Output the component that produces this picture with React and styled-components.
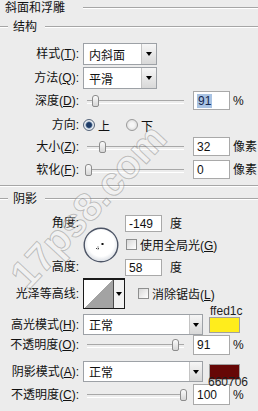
import React from "react";
import styled, { createGlobalStyle } from "styled-components";

const Global = createGlobalStyle`
  html, body { margin: 0; padding: 0; background: #ececec; }
  body {
    font-family: "Liberation Sans", "Noto Sans CJK SC", sans-serif;
    font-size: 12px;
    color: #111;
  }
  * { box-sizing: border-box; }
`;

const Panel = styled.div`
  position: relative;
  width: 258px;
  height: 411px;
  overflow: hidden;
  background: #ececec;
  display: flex;
  flex-direction: column;
`;

const Etched = styled.div`
  height: 2px;
  border-top: 1px solid #a6a6a6;
  border-bottom: 1px solid #ffffff;
`;

const TitleRow = styled.div`
  display: flex;
  align-items: center;
  height: 16px;
  padding-left: 5px;
`;

const Title = styled.span`
  white-space: nowrap;
  line-height: 14px;
`;

const TitleLine = styled(Etched)`
  flex: 1;
  margin-left: 18px;
`;

const GroupHeader = styled.div`
  display: flex;
  align-items: center;
  height: 20px;
  margin-top: ${(p) => p.$mt}px;
`;

const LeadLine = styled(Etched)`
  width: 8px;
`;

const HeaderText = styled.span`
  padding: 0 5px;
  line-height: 14px;
  white-space: nowrap;
`;

const TailLine = styled(Etched)`
  flex: 1;
  margin-left: 3px;
`;

const Rule = styled(Etched)`
  margin-top: ${(p) => p.$mt}px;
`;

const Row = styled.div`
  display: flex;
  align-items: center;
  height: ${(p) => p.$h}px;
  margin-top: ${(p) => p.$mt || 0}px;
  flex: none;
`;

const Label = styled.span`
  width: 79px;
  flex: none;
  text-align: right;
  white-space: nowrap;
  line-height: 14px;
`;

const Select = styled.div`
  display: flex;
  width: ${(p) => p.$w}px;
  height: 100%;
  margin-left: 4px;
  border: 1px solid #9da1a6;
  background: #fff;
  flex: none;
`;

const SelectText = styled.span`
  flex: 1;
  display: flex;
  align-items: center;
  padding-left: 5px;
  white-space: nowrap;
`;

const SelectArrow = styled.span`
  width: ${(p) => p.$w}px;
  border-left: 1px solid #c4c4c4;
  background: linear-gradient(#f6f6f6, #d8d8d8);
  display: flex;
  align-items: center;
  justify-content: center;
  &::after {
    content: "";
    border-left: 3.5px solid transparent;
    border-right: 3.5px solid transparent;
    border-top: 4px solid #000;
  }
`;

const Slider = styled.div`
  position: relative;
  width: 97px;
  height: 14px;
  margin-left: 8px;
  flex: none;
  &::before {
    content: "";
    position: absolute;
    left: 0;
    right: 0;
    top: 6px;
    height: 2px;
    border-top: 1px solid #a8a8a8;
    border-bottom: 1px solid #fff;
  }
`;

const Thumb = styled.span`
  position: absolute;
  top: 1px;
  width: 7px;
  height: 12px;
  border: 1px solid #8c8c8c;
  border-radius: 3px 3px 2px 2px;
  background: linear-gradient(#fbfbfb, #d6d6d6);
`;

const NumBox = styled.div`
  width: 37px;
  height: ${(p) => p.$h}px;
  margin-left: ${(p) => p.$ml}px;
  border: 1px solid #a9a9a9;
  background: #fff;
  display: flex;
  align-items: center;
  padding-left: 3px;
  flex: none;
  white-space: nowrap;
`;

const Selected = styled.span`
  background: #a9c3e3;
  color: #14264f;
  padding: 0 1px;
  line-height: 14px;
`;

const Unit = styled.span`
  margin-left: ${(p) => p.$ml || 3}px;
  white-space: nowrap;
  line-height: 12px;
`;

const Radio = styled.span`
  width: 12px;
  height: 12px;
  border-radius: 50%;
  margin-left: ${(p) => p.$ml}px;
  flex: none;
  border: 1px solid ${(p) => (p.$on ? "#56657a" : "#9a9a9a")};
  background: ${(p) =>
    p.$on
      ? "radial-gradient(circle, #1d3b66 0 2.4px, #7e97b6 3.2px, #eef2f6 4px, #c9d0d8 100%)"
      : "radial-gradient(circle, #f6f6f6 30%, #d2d2d2 100%)"};
`;

const RadioText = styled.span`
  margin-left: 3px;
`;

const AngleBlock = styled.div`
  display: flex;
  height: 61px;
  margin-top: 6px;
  flex: none;
`;

const AngleLabels = styled.div`
  width: 79px;
  display: flex;
  flex-direction: column;
  justify-content: space-between;
  text-align: right;
  & > span {
    height: 17px;
    line-height: 17px;
  }
`;

const Dial = styled.svg`
  width: 36px;
  height: 36px;
  margin-left: 4px;
  margin-top: 12px;
  flex: none;
`;

const AngleFields = styled.div`
  margin-left: 6px;
  display: flex;
  flex-direction: column;
`;

const Check = styled.span`
  width: 11px;
  height: 11px;
  flex: none;
  margin-left: ${(p) => p.$ml}px;
  border: 1px solid #8e8f8f;
  background: linear-gradient(135deg, #d8d8d8, #ffffff);
`;

const CheckText = styled.span`
  margin-left: 3px;
  white-space: nowrap;
`;

const ContourThumb = styled.div`
  display: flex;
  width: 42px;
  height: 31px;
  margin-left: 4px;
  border: 1px solid #1a1a1a;
  border-top-width: 2px;
  flex: none;
`;

const ContourGraph = styled.div`
  flex: 1;
  background: linear-gradient(to bottom right, #ffffff 50%, #a3a3a3 50%);
`;

const ContourArrow = styled(SelectArrow)`
  border-left: 1px solid #4a4a4a;
  background: #f2f2f2;
`;

const Swatch = styled.div`
  position: relative;
  width: 31px;
  height: 16px;
  margin-left: 6px;
  border: 1px solid #a0a0a0;
  background: ${(p) => p.$c};
  flex: none;
`;

const HexLabel = styled.span`
  position: absolute;
  left: ${(p) => p.$left}px;
  ${(p) => (p.$below ? "top: 100%; margin-top: -2px;" : "bottom: 100%; margin-bottom: 2px;")}
  font-family: "Liberation Sans", sans-serif;
  font-size: 12px;
  line-height: 10px;
  color: #1e1e1e;
  white-space: nowrap;
`;

const Watermark = styled.span`
  position: absolute;
  left: -24px;
  top: 184px;
  width: 224px;
  text-align: center;
  line-height: 44px;
  font-family: "Liberation Sans", sans-serif;
  font-size: 40px;
  font-weight: bold;
  color: rgba(255, 255, 255, 0.3);
  -webkit-text-stroke: 1px rgba(70, 70, 70, 0.3);
  transform: rotate(-47deg);
  pointer-events: none;
  white-space: nowrap;
`;

const Key = ({ children }) => <u>{children}</u>;

const SliderRow = ({ label, mt, h, thumb, value, unit, selected }) => (
  <Row $h={h} $mt={mt}>
    <Label>{label}</Label>
    <Slider>
      <Thumb style={{ left: thumb }} />
    </Slider>
    <NumBox $h={h} $ml={9}>
      {selected ? <Selected>{value}</Selected> : value}
    </NumBox>
    <Unit>{unit}</Unit>
  </Row>
);

export default function App() {
  return (
    <>
      <Global />
      <Panel>
        <TitleRow>
          <Title>斜面和浮雕</Title>
          <TitleLine />
        </TitleRow>

        <GroupHeader $mt={1}>
          <LeadLine />
          <HeaderText>结构</HeaderText>
          <TailLine />
        </GroupHeader>

        <Row $h={22} $mt={6}>
          <Label>
            样式(<Key>T</Key>):
          </Label>
          <Select $w={74}>
            <SelectText>内斜面</SelectText>
            <SelectArrow $w={15} />
          </Select>
        </Row>
        <Row $h={22} $mt={2}>
          <Label>
            方法(<Key>Q</Key>):
          </Label>
          <Select $w={74}>
            <SelectText>平滑</SelectText>
            <SelectArrow $w={15} />
          </Select>
        </Row>

        <SliderRow
          label={<>深度(<Key>D</Key>):</>}
          mt={2}
          h={19}
          thumb={5}
          value="91"
          unit="%"
          selected
        />

        <Row $h={20} $mt={5}>
          <Label>方向:</Label>
          <Radio $on $ml={4} />
          <RadioText>上</RadioText>
          <Radio $ml={16} />
          <RadioText>下</RadioText>
        </Row>

        <SliderRow
          label={<>大小(<Key>Z</Key>):</>}
          mt={2}
          h={19}
          thumb={12}
          value="32"
          unit="像素"
        />
        <SliderRow
          label={<>软化(<Key>F</Key>):</>}
          mt={4}
          h={19}
          thumb={-2}
          value="0"
          unit="像素"
        />

        <Rule $mt={6} />

        <GroupHeader $mt={2}>
          <LeadLine />
          <HeaderText>阴影</HeaderText>
          <TailLine />
        </GroupHeader>

        <AngleBlock>
          <AngleLabels>
            <span>角度:</span>
            <span>高度:</span>
          </AngleLabels>
          <Dial viewBox="0 0 36 36">
            <defs>
              <radialGradient id="dialFill" cx="50%" cy="45%" r="55%">
                <stop offset="70%" stopColor="#ffffff" />
                <stop offset="100%" stopColor="#d9dde3" />
              </radialGradient>
            </defs>
            <circle cx="18" cy="18" r="16.8" fill="url(#dialFill)" stroke="#4d5566" strokeWidth="1.4" />
            <rect x="18.5" y="16" width="2" height="2" fill="#111" />
            <path d="M13 21.5h4M15 19.5v4" stroke="#444" strokeWidth="1" strokeDasharray="1 1" />
          </Dial>
          <AngleFields>
            <Row $h={17}>
              <NumBox $h={17} $ml={0}>-149</NumBox>
              <Unit $ml={8}>度</Unit>
            </Row>
            <Row $h={12} $mt={6}>
              <Check $ml={1} />
              <CheckText>
                使用全局光(<Key>G</Key>)
              </CheckText>
            </Row>
            <Row $h={17} $mt={9}>
              <NumBox $h={17} $ml={0}>58</NumBox>
              <Unit $ml={8}>度</Unit>
            </Row>
          </AngleFields>
        </AngleBlock>

        <Row $h={31} $mt={2}>
          <Label>光泽等高线:</Label>
          <ContourThumb>
            <ContourGraph />
            <ContourArrow $w={11} />
          </ContourThumb>
          <Check $ml={13} />
          <CheckText>
            消除锯齿(<Key>L</Key>)
          </CheckText>
        </Row>

        <Row $h={21} $mt={5}>
          <Label>
            高光模式(<Key>H</Key>):
          </Label>
          <Select $w={120}>
            <SelectText>正常</SelectText>
            <SelectArrow $w={13} />
          </Select>
          <Swatch $c="#ffed1c">
            <HexLabel $left={0}>ffed1c</HexLabel>
          </Swatch>
        </Row>
        <SliderRow
          label={<>不透明度(<Key>O</Key>):</>}
          mt={0}
          h={20}
          thumb={85}
          value="91"
          unit="%"
        />
        <Row $h={21} $mt={6}>
          <Label>
            阴影模式(<Key>A</Key>):
          </Label>
          <Select $w={120}>
            <SelectText>正常</SelectText>
            <SelectArrow $w={13} />
          </Select>
          <Swatch $c="#660706">
            <HexLabel $left={-2} $below>
              660706
            </HexLabel>
          </Swatch>
        </Row>
        <SliderRow
          label={<>不透明度(<Key>C</Key>):</>}
          mt={2}
          h={21}
          thumb={93}
          value="100"
          unit="%"
        />

        <Watermark>17ps8.com</Watermark>
      </Panel>
    </>
  );
}
